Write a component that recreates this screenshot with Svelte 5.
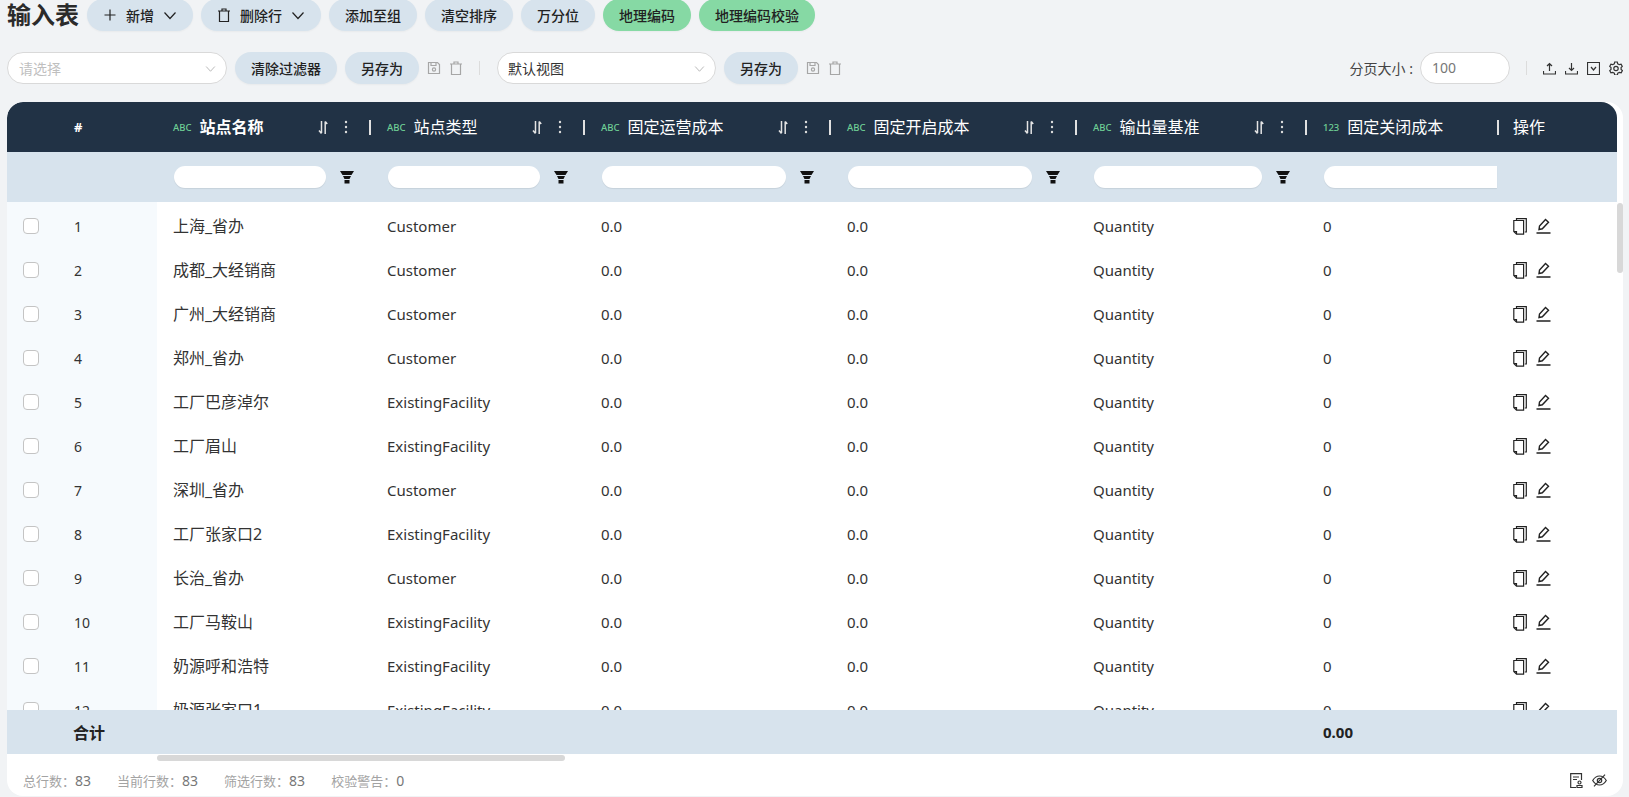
<script>
  const columns = [
    { name: '站点名称', kind: 'ABC', bold: true },
    { name: '站点类型', kind: 'ABC' },
    { name: '固定运营成本', kind: 'ABC' },
    { name: '固定开启成本', kind: 'ABC' },
    { name: '输出量基准', kind: 'ABC' },
    { name: '固定关闭成本', kind: '123', clipped: true }
  ];
  const C = 'Customer';
  const E = 'ExistingFacility';
  const rows = [
    ['上海_省办', C], ['成都_大经销商', C], ['广州_大经销商', C], ['郑州_省办', C],
    ['工厂巴彦淖尔', E], ['工厂眉山', E], ['深圳_省办', C], ['工厂张家口2', E],
    ['长治_省办', C], ['工厂马鞍山', E], ['奶源呼和浩特', E], ['奶源张家口1', E]
  ];
  const stats = [['总行数', 83], ['当前行数', 83], ['筛选行数', 83], ['校验警告', 0]];
</script>

{#snippet chevron()}
  <svg class="ic chev" width="14" height="14" viewBox="0 0 14 14"><path d="M1.500 4.500l5.500 6 5.500-6" /></svg>
{/snippet}
{#snippet trash()}
  <svg class="ic" width="14" height="14" viewBox="0 0 14 14"><path d="M1 3h12M5 3V1h4v2M2.500 3v10.500h9V3" /></svg>
{/snippet}
{#snippet save()}
  <svg class="ic" width="14" height="14" viewBox="0 0 14 14"><path d="M1.500 1.500h9l2 2v9h-11zM4 1.500v3h5v-3" /><circle cx="7" cy="8.500" r="1.600" /></svg>
{/snippet}
{#snippet funnel()}
  <svg width="14" height="13" viewBox="0 0 14 13"><path fill="#111" d="M0 0h14l-2.500 4h-9zM3 5h8L9.500 8h-5zM4.500 9h5v3.500h-5z" /></svg>
{/snippet}
{#snippet sortIcon()}
  <svg class="sort" width="10" height="15" viewBox="0 0 10 15"><path d="M3.500 1v12M1 10.500l2.500 3M7.200 14V1.500M7.200 1.500l2 2.500" /></svg>
{/snippet}
{#snippet dots()}
  <svg width="4" height="14" viewBox="0 0 4 14"><circle cx="2" cy="2" r="1.200" fill="#ddd" /><circle cx="2" cy="7" r="1.200" fill="#ddd" /><circle cx="2" cy="12" r="1.200" fill="#ddd" /></svg>
{/snippet}

<div class="page">
  <header class="bar-one">
    <h1>输入表</h1>
    <button class="pill">
      <svg class="ic" width="14" height="14" viewBox="0 0 14 14"><path d="M7 1.500v11M1.500 7h11" /></svg>
      <span class="pad">新增</span>{@render chevron()}
    </button>
    <button class="pill">{@render trash()}<span class="pad">删除行</span>{@render chevron()}</button>
    <button class="pill">添加至组</button>
    <button class="pill">清空排序</button>
    <button class="pill">万分位</button>
    <button class="pill green">地理编码</button>
    <button class="pill green">地理编码校验</button>
  </header>

  <section class="bar-two">
    <div class="select first"><span class="ph">请选择</span>{@render chevron()}</div>
    <button class="pill">清除过滤器</button>
    <button class="pill">另存为</button>
    <span class="muted">{@render save()}</span>
    <span class="muted">{@render trash()}</span>
    <span class="divider d1"></span>
    <div class="select second"><span>默认视图</span>{@render chevron()}</div>
    <button class="pill">另存为</button>
    <span class="muted">{@render save()}</span>
    <span class="muted">{@render trash()}</span>
    <span class="grow"></span>
    <span class="size-label">分页大小 :</span>
    <div class="size-input">100</div>
    <span class="divider d2"></span>
    <div class="tools">
      <svg class="ic" width="13" height="13" viewBox="0 0 13 13"><path d="M6.500 9V1.500M4 4l2.500-2.500L9 4M.5 9v3h12V9" /></svg>
      <svg class="ic" width="13" height="13" viewBox="0 0 13 13"><path d="M6.500 1v7.500M4 6l2.500 2.500L9 6M.5 9v3h12V9" /></svg>
      <svg class="ic" width="13" height="13" viewBox="0 0 13 13"><path d="M.5.5h12v12H.5zM4 5l2.500 3L9 5" /></svg>
      <svg class="ic" width="14" height="14" viewBox="0 0 14 14"><path d="M5.700 1h2.600l.4 1.800 1.600.9 1.800-.5 1.200 2.200L12.100 6.600v1.800l1.300 1.200-1.200 2.200-1.800-.5-1.600.9-.4 1.800H5.700l-.4-1.800-1.600-.9-1.800.5-1.200-2.200 1.300-1.200V6.600L.7 5.400l1.200-2.200 1.800.5 1.600-.9z" /><circle cx="7" cy="7.500" r="2.200" /></svg>
    </div>
  </section>

  <main class="card">
    <div class="grid head">
      <div class="cell"></div>
      <div class="cell hash">#</div>
      {#each columns as col}
        <div class="cell col-head">
          <span class="kind">{col.kind}</span>
          <span class="title" class:bold={col.bold}>{col.name}</span>
          <span class="grow"></span>
          {#if !col.clipped}
            {@render sortIcon()}
            <span class="dots">{@render dots()}</span>
          {/if}
          <span class="sep"></span>
        </div>
      {/each}
      <div class="cell actions-head">操作</div>
    </div>

    <div class="grid filters">
      <div></div>
      <div></div>
      {#each columns as col}
        <div class="filter" class:clipped={col.clipped}>
          <input type="text" />
          {#if !col.clipped}<span class="fn">{@render funnel()}</span>{/if}
        </div>
      {/each}
      <div></div>
    </div>

    <div class="body">
      {#each rows as row, i}
        <div class="grid row">
          <div class="check"><span class="box"></span></div>
          <div class="cell">{i + 1}</div>
          <div class="cell name">{row[0]}</div>
          <div class="cell latin">{row[1]}</div>
          <div class="cell latin">0.0</div>
          <div class="cell latin">0.0</div>
          <div class="cell latin">Quantity</div>
          <div class="cell latin">0</div>
          <div class="acts">
            <svg class="act" width="14" height="17" viewBox="0 0 14 17"><path d="M3.500 2V.7h9.800v13.300h-1.500M.8 2.500h9.800v13.700H3.500L.8 13.500zM.8 13.500h2.700v2.700" /></svg>
            <svg class="act pen" width="15" height="16" viewBox="0 0 15 16"><path d="M3 11.500l.5-3.500 6-6.500 3 2.800-6.200 6.500zM.5 15h14" /></svg>
          </div>
        </div>
      {/each}
    </div>

    <div class="grid sum">
      <div></div>
      <div class="total">合计</div>
      <div></div><div></div><div></div><div></div><div></div>
      <div class="amount">0.00</div>
      <div></div>
    </div>

    <footer class="foot">
      {#each stats as s}
        <span class="stat">{s[0]}：<b>{s[1]}</b></span>
      {/each}
      <span class="grow"></span>
      <svg class="ic foot-ic" width="13" height="15" viewBox="0 0 13 15"><path d="M6 14.500H.7V.7h10.800V7M3 4h6M3 6.500h4" /><circle cx="9.500" cy="9.500" r="1.500" /><path d="M7 14.500h5v-2H7z" /></svg>
      <svg class="ic foot-ic" width="15" height="13" viewBox="0 0 15 13"><path d="M.7 6.500C2.500 3.500 5 2 7.500 2s5 1.500 6.800 4.500C12.500 9.500 10 11 7.500 11S2.500 9.500.7 6.500z" /><circle cx="7.500" cy="6.500" r="2.200" /><path d="M13 .7L2 12.300" /></svg>
    </footer>

    <span class="thumb-v"></span>
    <span class="thumb-h"></span>
  </main>
</div>

<style>
  :global(body) {
    margin: 0;
    background: #f1f3f5;
    overflow: hidden;
  }
  .page {
    height: 797px;
    font-family: "Noto Sans", "Noto Sans CJK SC", sans-serif;
    font-size: 14px;
    color: #333;
    overflow: hidden;
  }
  .bar-one {
    display: flex;
    align-items: flex-end;
    gap: 8px;
    height: 31px;
    padding-left: 7px;
  }
  h1 {
    margin: 0 0 1px;
    width: 72px;
    font-size: 24px;
    line-height: 30px;
    font-weight: 700;
    color: #2b2b2b;
    white-space: nowrap;
  }
  .pill {
    display: inline-flex;
    align-items: center;
    justify-content: center;
    flex: none;
    height: 32px;
    padding: 0 16px;
    border: 0;
    border-radius: 16px;
    background: #d7e3ed;
    box-shadow: 0 1px 2px rgba(0, 0, 0, .04);
    color: #222;
    font: 500 14px "Noto Sans", "Noto Sans CJK SC", sans-serif;
    white-space: nowrap;
  }
  .pill.green { background: #86d9a4; }
  .pad { padding: 0 9px; }
  .ic, .act, .sort {
    fill: none;
    stroke: currentColor;
    stroke-width: 1.2;
  }
  .pen { stroke-width: 1.4; }
  .bar-two {
    display: flex;
    align-items: center;
    gap: 8px;
    height: 32px;
    margin: 21px 0 18px;
    padding-left: 7px;
  }
  .select {
    display: flex;
    align-items: center;
    justify-content: space-between;
    box-sizing: border-box;
    height: 32px;
    padding: 0 10px 0 11px;
    background: #fff;
    border: 1px solid #d9d9d9;
    border-radius: 16px;
  }
  .select .chev { color: #b5b5b5; width: 11px; height: 11px; }
  .select.first { width: 220px; }
  .select.second { width: 219px; padding-left: 10px; }
  .ph { color: #bfbfbf; }
  .muted { display: inline-flex; color: #a6a6a6; }
  .divider {
    width: 1px;
    height: 14px;
    background: #dcdcdc;
  }
  .d1 { margin: 0 9px 0 8px; }
  .d2 { margin: 0 8px 0 8px; }
  .grow { flex: 1; }
  .size-label { color: #444; font-size: 14px; margin-right: -1px; }
  .size-input {
    box-sizing: border-box;
    width: 90px;
    height: 32px;
    line-height: 30px;
    padding-left: 11px;
    background: #fff;
    border: 1px solid #d9d9d9;
    border-radius: 16px;
    color: #777;
  }
  .tools {
    display: flex;
    align-items: center;
    gap: 9px;
    padding-right: 6px;
    color: #333;
  }
  .card {
    position: relative;
    margin-left: 7px;
    width: 1616px;
    height: 694px;
    background: #fff;
    border-radius: 16px;
    overflow: hidden;
  }
  .grid {
    display: grid;
    grid-template-columns: 53px 97px 214px 214px 246px 246px 230px 192px 118px;
    width: 1610px;
  }
  .head {
    height: 50px;
    align-items: center;
    background: #213245;
    color: #fff;
    border-radius: 16px 16px 0 0;
    font-size: 16px;
  }
  .cell {
    padding-left: 14px;
    white-space: nowrap;
    overflow: hidden;
  }
  .hash { font-size: 13px; font-weight: 700; }
  .col-head {
    display: flex;
    align-items: center;
    padding-left: 16px;
    height: 100%;
  }
  .kind {
    margin-right: 8px;
    font-size: 9.500px;
    font-weight: 500;
    color: #6fd095;
  }
  .title { font-size: 16px; margin-top: -2px; }
  .title.bold { font-weight: 700; }
  .sort {
    color: #e4e4e4;
    stroke-width: 1.5;
  }
  .dots {
    display: inline-flex;
    margin-left: 16px;
    margin-right: 21px;
  }
  .sep {
    flex: none;
    width: 2px;
    height: 15px;
    background: #e0e0e0;
  }
  .actions-head { padding-left: 14px; margin-top: -2px; }
  .filters {
    height: 50px;
    align-items: center;
    background: #d7e3ed;
  }
  .filter {
    display: flex;
    align-items: center;
    padding-left: 17px;
    padding-right: 3px;
  }
  .filter input {
    flex: 1;
    min-width: 0;
    height: 22px;
    box-sizing: border-box;
    padding: 0 8px;
    border: 0;
    border-radius: 11px;
    background: #fff;
    box-shadow: 0 1px 1px rgba(0, 0, 0, .08);
  }
  .filter.clipped { padding-right: 2px; }
  .filter.clipped input { border-radius: 11px 0 0 11px; }
  .fn {
    flex: none;
    display: inline-flex;
    justify-content: center;
    width: 42px;
  }
  .body {
    height: 508px;
    box-sizing: border-box;
    padding-top: 2px;
    width: 1610px;
    overflow: hidden;
    background: linear-gradient(to right, #f6fafd 150px, #fff 150px);
  }
  .row {
    height: 44px;
    align-items: center;
  }
  .check { padding-left: 16px; display: flex; }
  .box {
    width: 16px;
    height: 16px;
    box-sizing: border-box;
    background: #fff;
    border: 1px solid #c4c4c4;
    border-radius: 4px;
  }
  .name { padding-left: 16px; font-size: 16px; line-height: 24px; }
  .latin { padding-left: 16px; font-size: 15px; line-height: 24px; }
  .acts {
    display: flex;
    align-items: center;
    gap: 9px;
    padding-left: 14px;
    color: #222;
  }
  .sum {
    height: 44px;
    align-items: center;
    background: #d7e3ed;
    color: #222;
  }
  .total { padding-left: 13px; font-size: 16px; font-weight: 700; }
  .amount { padding-left: 16px; font-size: 15px; font-weight: 700; }
  .foot {
    display: flex;
    align-items: center;
    gap: 26px;
    height: 38px;
    margin-top: 7px;
    padding: 0 16px;
    font-size: 13px;
    color: #a3a3a3;
  }
  .stat b { font-weight: 400; font-size: 14px; color: #777; }
  .foot-ic { color: #333; margin-left: -17px; }
  .thumb-v {
    position: absolute;
    top: 101px;
    right: 0;
    width: 6px;
    height: 70px;
    background: #d8d8d8;
    border-radius: 3px;
  }
  .thumb-h {
    position: absolute;
    top: 653px;
    left: 150px;
    width: 408px;
    height: 6px;
    background: #d8d8d8;
    border-radius: 3px;
  }
</style>
